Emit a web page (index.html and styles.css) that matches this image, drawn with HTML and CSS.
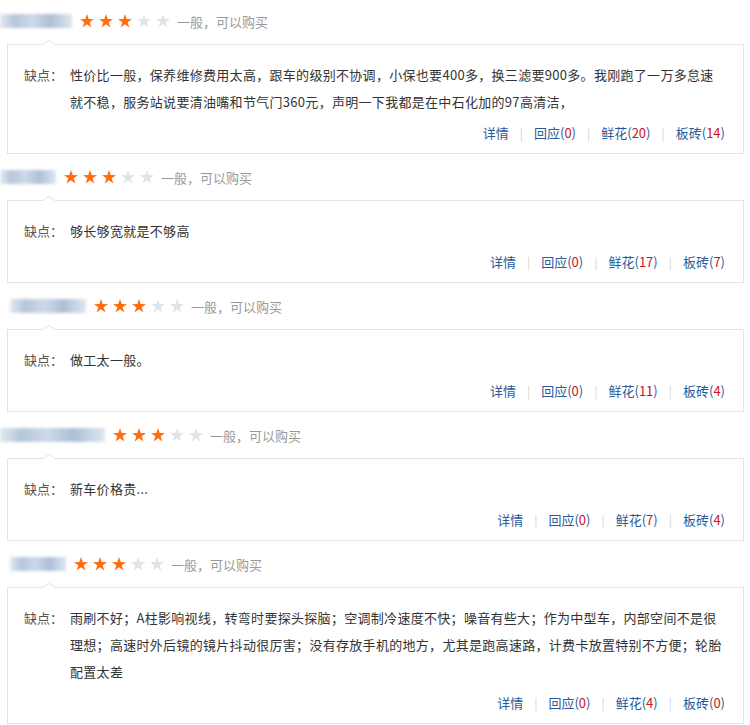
FILE: index.html
```html
<!DOCTYPE html>
<html lang="zh-CN">
<head>
  <meta charset="UTF-8">
  <meta name="viewport" content="width=device-width, initial-scale=1.0">
  <title>口碑评论</title>
  <link rel="stylesheet" href="styles.css">
</head>
<body>
  <div class="review-list">

    <div class="review">
      <div class="review-head">
        <span class="user" style="width: 72px;"></span>
        <span class="stars">
          <i class="star on"></i><i class="star on"></i><i class="star on"></i><i class="star"></i><i class="star"></i>
        </span>
        <span class="verdict">一般，可以购买</span>
      </div>
      <div class="review-box">
        <div class="review-body">
          <span class="label">缺点：</span>
          <p class="content">性价比一般，保养维修费用太高，跟车的级别不协调，小保也要400多，换三滤要900多。我刚跑了一万多怠速就不稳，服务站说要清油嘴和节气门360元，声明一下我都是在中石化加的97高清洁，</p>
        </div>
        <div class="review-links">
          <a href="#">详情</a><span class="sep">|</span>
          <a href="#">回应(<em>0</em>)</a><span class="sep">|</span>
          <a href="#">鲜花(<em>20</em>)</a><span class="sep">|</span>
          <a href="#">板砖(<em>14</em>)</a>
        </div>
      </div>
    </div>

    <div class="review">
      <div class="review-head">
        <span class="user" style="width: 56px;"></span>
        <span class="stars">
          <i class="star on"></i><i class="star on"></i><i class="star on"></i><i class="star"></i><i class="star"></i>
        </span>
        <span class="verdict">一般，可以购买</span>
      </div>
      <div class="review-box">
        <div class="review-body">
          <span class="label">缺点：</span>
          <p class="content">够长够宽就是不够高</p>
        </div>
        <div class="review-links">
          <a href="#">详情</a><span class="sep">|</span>
          <a href="#">回应(<em>0</em>)</a><span class="sep">|</span>
          <a href="#">鲜花(<em>17</em>)</a><span class="sep">|</span>
          <a href="#">板砖(<em>7</em>)</a>
        </div>
      </div>
    </div>

    <div class="review">
      <div class="review-head">
        <span class="user user-indent" style="width: 76px;"></span>
        <span class="stars">
          <i class="star on"></i><i class="star on"></i><i class="star on"></i><i class="star"></i><i class="star"></i>
        </span>
        <span class="verdict">一般，可以购买</span>
      </div>
      <div class="review-box">
        <div class="review-body">
          <span class="label">缺点：</span>
          <p class="content">做工太一般。</p>
        </div>
        <div class="review-links">
          <a href="#">详情</a><span class="sep">|</span>
          <a href="#">回应(<em>0</em>)</a><span class="sep">|</span>
          <a href="#">鲜花(<em>11</em>)</a><span class="sep">|</span>
          <a href="#">板砖(<em>4</em>)</a>
        </div>
      </div>
    </div>

    <div class="review">
      <div class="review-head">
        <span class="user" style="width: 105px;"></span>
        <span class="stars">
          <i class="star on"></i><i class="star on"></i><i class="star on"></i><i class="star"></i><i class="star"></i>
        </span>
        <span class="verdict">一般，可以购买</span>
      </div>
      <div class="review-box">
        <div class="review-body">
          <span class="label">缺点：</span>
          <p class="content">新车价格贵...</p>
        </div>
        <div class="review-links">
          <a href="#">详情</a><span class="sep">|</span>
          <a href="#">回应(<em>0</em>)</a><span class="sep">|</span>
          <a href="#">鲜花(<em>7</em>)</a><span class="sep">|</span>
          <a href="#">板砖(<em>4</em>)</a>
        </div>
      </div>
    </div>

    <div class="review">
      <div class="review-head">
        <span class="user user-indent" style="width: 56px;"></span>
        <span class="stars">
          <i class="star on"></i><i class="star on"></i><i class="star on"></i><i class="star"></i><i class="star"></i>
        </span>
        <span class="verdict">一般，可以购买</span>
      </div>
      <div class="review-box">
        <div class="review-body">
          <span class="label">缺点：</span>
          <p class="content">雨刷不好；A柱影响视线，转弯时要探头探脑；空调制冷速度不快；噪音有些大；作为中型车，内部空间不是很理想；高速时外后镜的镜片抖动很厉害；没有存放手机的地方，尤其是跑高速路，计费卡放置特别不方便；轮胎配置太差</p>
        </div>
        <div class="review-links">
          <a href="#">详情</a><span class="sep">|</span>
          <a href="#">回应(<em>0</em>)</a><span class="sep">|</span>
          <a href="#">鲜花(<em>4</em>)</a><span class="sep">|</span>
          <a href="#">板砖(<em>0</em>)</a>
        </div>
      </div>
    </div>

  </div>
</body>
</html>
```

FILE: styles.css
```css
body {
    margin: 0;
    background: #fff;
    font-family: "Noto Sans CJK SC", "Liberation Sans", sans-serif;
    font-size: 13px;
    color: #333;
}
.review-list {
    padding-top: 8px;
}
.review {
    margin-bottom: 10px;
}
.review-head {
    display: flex;
    align-items: center;
    height: 26px;
}
.user {
    display: block;
    height: 14px;
    margin-right: 8px;
    background: linear-gradient(90deg, #dde6f0 0%, #a9bdd4 20%, #c5d4e4 45%, #9fb5cf 70%, #d8e2ee 100%);
    filter: blur(1.5px);
    opacity: 0.85;
}
.user-indent {
    margin-left: 10px;
}
.stars {
    display: flex;
    gap: 5px;
}
.star {
    display: block;
    width: 14px;
    height: 14px;
    background: #dfe4ea;
    clip-path: polygon(50% 0%, 62% 36%, 100% 37%, 69% 59%, 81% 96%, 50% 74%, 19% 96%, 31% 59%, 0% 37%, 38% 36%);
}
.star.on {
    background: #ff6d0c;
}
.verdict {
    margin-left: 7px;
    color: #999;
}
.review-box {
    position: relative;
    margin: 10px 6px 0 7px;
    border: 1px solid #e4e4e4;
    padding: 16px 20px 10px 16px;
}
.review-box::before,
.review-box::after {
    content: "";
    position: absolute;
    left: 33px;
    border: 8px solid transparent;
    border-top: 0;
}
.review-box::before {
    top: -5px;
    border-bottom: 5px solid #e4e4e4;
}
.review-box::after {
    top: -4px;
    border-bottom: 5px solid #fff;
}
.review-body {
    display: flex;
    line-height: 27px;
}
.label {
    flex: none;
    width: 46px;
    color: #555;
}
.content {
    margin: 0;
    flex: 1;
    letter-spacing: 0.3px;
}
.review-links {
    display: flex;
    justify-content: flex-end;
    align-items: center;
    margin-top: 8px;
    margin-right: -2px;
    line-height: 20px;
}
.review-links a {
    color: #2a5a9b;
    text-decoration: none;
}
.review-links em {
    font-style: normal;
    color: #c8141e;
}
.sep {
    margin: 0 11px;
    color: #d4d4d4;
    font-size: 12px;
}
```
